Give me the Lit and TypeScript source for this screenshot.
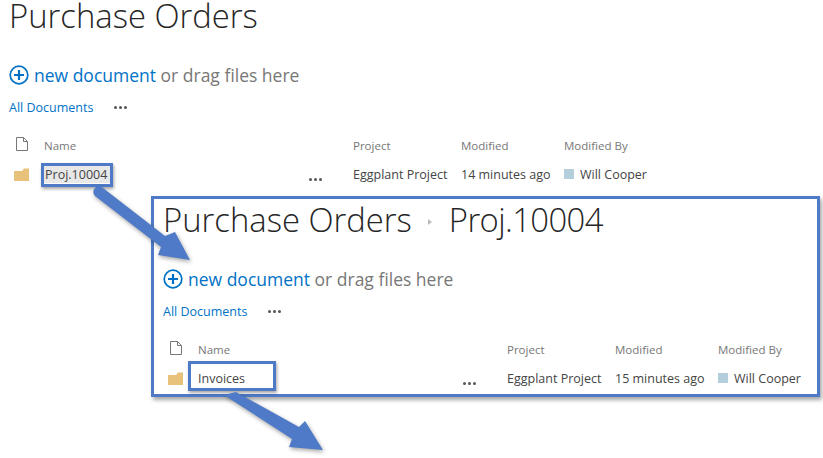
import { LitElement, html, css, svg } from "lit";
import { customElement, property } from "lit/decorators.js";

const dots = html`<span class="dots"><i></i><i></i><i></i></span>`;

@customElement("library-view")
class LibraryView extends LitElement {
  @property() crumb = "";
  @property() item = "";
  @property() age = "";
  @property({ type: Boolean }) selected = false;

  static styles = css`
    :host { display: block; width: 660px; font-family: "Open Sans", sans-serif; color: #444; }
    .title { display: flex; align-items: center; height: 32px; font-size: 32.8px; font-weight: 300; line-height: 32px; color: #262626; white-space: nowrap; }
    .crumb { letter-spacing: -0.6px; }
    .sep { width: 0; height: 0; margin: 3px 17px 0 16px; border-left: 4px solid #bbb; border-top: 3px solid transparent; border-bottom: 3px solid transparent; }
    .new { display: flex; align-items: center; gap: 5px; margin-top: 30px; height: 26px; font-size: 17.5px; color: #777; white-space: nowrap; }
    .new b { font-weight: 400; color: #0072c6; }
    .new svg { width: 20px; height: 20px; display: block; }
    .views { display: flex; align-items: center; margin-top: 9px; height: 20px; font-size: 12.5px; color: #0072c6; }
    .views .dots { margin-left: 21px; }
    .dots { display: inline-flex; gap: 2px; align-items: center; }
    .dots i { width: 3px; height: 3px; border-radius: 50%; background: #555; }
    .grid { display: grid; grid-template-columns: 35px 265px 44px 108px 103px 110px; align-items: center; white-space: nowrap; }
    .head { height: 20px; margin-top: 18px; font-size: 11.5px; color: #777; }
    .row { height: 38px; font-size: 12.5px; color: #444; }
    .page { width: 12px; height: 14px; display: block; margin: -2px 0 0 7px; }
    .folder { width: 15px; height: 13px; display: block; margin-left: 5px; }
    .sel { background: #e8e8e8; justify-self: start; padding: 0 3px; margin-left: -2px; }
    .user { display: flex; align-items: center; gap: 6px; }
    .user i { width: 10px; height: 10px; background: #b4cfdb; }
    .row .dots { margin-top: 10px; }
  `;

  render() {
    return html`
      <div class="title">Purchase Orders${this.crumb ? html`<span class="sep"></span><span class="crumb">${this.crumb}</span>` : ""}</div>
      <div class="new">
        <svg viewBox="0 0 20 20"><circle cx="10" cy="10" r="8.8" fill="none" stroke="#0072c6" stroke-width="1.7"/><path d="M10 5v10M5 10h10" stroke="#0072c6" stroke-width="2.2"/></svg>
        <span><b>new document</b> or drag files here</span>
      </div>
      <div class="views">All Documents${dots}</div>
      <div class="grid head">
        <svg class="page" viewBox="0 0 12 14"><path d="M.5 .5h7l4 4v9H.5zM7.500.5v4h4" fill="#fff" stroke="#777"/></svg>
        <span>Name</span><span></span><span>Project</span><span>Modified</span><span>Modified By</span>
      </div>
      <div class="grid row">
        <svg class="folder" viewBox="0 0 15 13"><path d="M0 3h8l2-2.500h5V13H0z" fill="#e8c27b"/></svg>
        <span class=${this.selected ? "sel" : ""}>${this.item}</span>${dots}
        <span>Eggplant Project</span><span>${this.age}</span>
        <span class="user"><i></i>Will Cooper</span>
      </div>
    `;
  }
}

@customElement("app-root")
class AppRoot extends LitElement {
  static styles = css`
    :host { display: block; position: relative; width: 823px; height: 458px; overflow: hidden; background: #fff; }
    .main { padding: 0 0 0 9px; }
    .panel { position: absolute; left: 151px; top: 196px; width: 669px; height: 201px; box-sizing: border-box; border: 3px solid #4f7ac7; background: #fff; padding: 5px 0 0 9px; box-shadow: 2px 3px 4px rgba(0,0,0,.35); }
    .box { position: absolute; box-sizing: border-box; border: 3px solid #4f7ac7; box-shadow: 1px 2px 3px rgba(0,0,0,.35); }
    .b1 { left: 41px; top: 163px; width: 72px; height: 24px; }
    .b2 { left: 188px; top: 361px; width: 88px; height: 30px; }
    .arrows { position: absolute; left: 0; top: 0; width: 823px; height: 458px; filter: drop-shadow(1px 2px 2px rgba(0,0,0,.35)); }
  `;

  render() {
    return html`
      <div class="main"><library-view item="Proj.10004" age="14 minutes ago" selected></library-view></div>
      <div class="box b1"></div>
      <div class="panel"><library-view crumb="Proj.10004" item="Invoices" age="15 minutes ago"></library-view></div>
      <div class="box b2"></div>
      <svg class="arrows" viewBox="0 0 823 458">
        ${svg`<path d="M95 196Q91 191 96 187Q100 185 103 188L165 236L175 232L190 260L158 255L161 247Z" fill="#4f7ac7"/>
        <path d="M224 395L236 392L299 427L305 421L323 450L289 447L292 439Z" fill="#4f7ac7"/>`}
      </svg>
    `;
  }
}
